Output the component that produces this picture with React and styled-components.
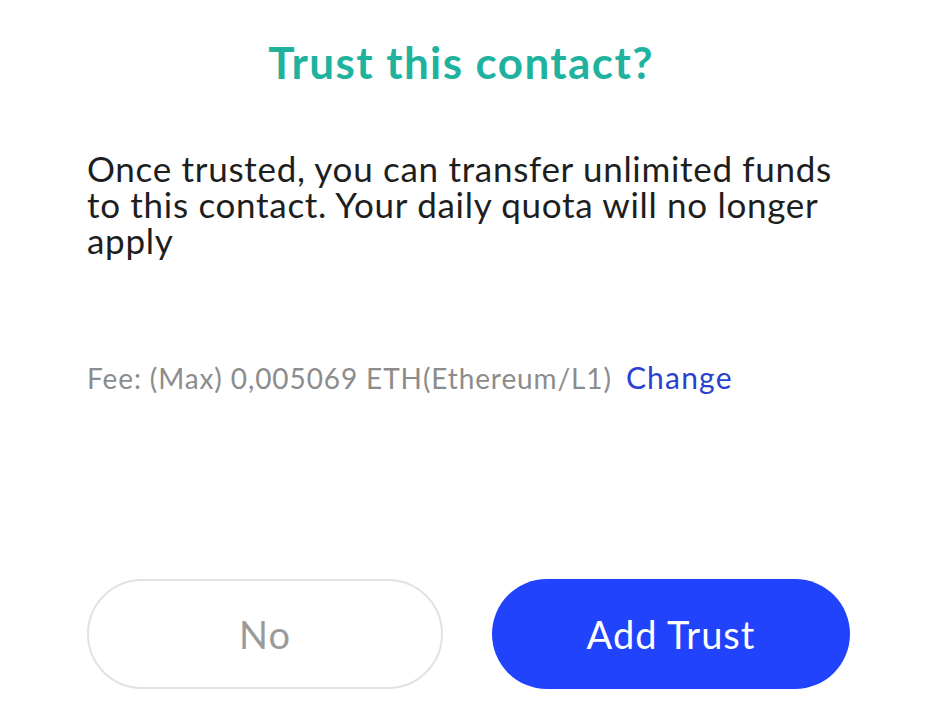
import React from "react";
import styled, { createGlobalStyle } from "styled-components";

const GlobalStyle = createGlobalStyle`
  html, body {
    margin: 0;
    padding: 0;
    background: #fff;
  }
  body {
    font-family: "Lato", "Open Sans", sans-serif;
  }
`;

const TrustDialog = () => {
  return (
    <>
      <GlobalStyle />
      <Sheet>
        <Title>Trust this contact?</Title>
        <Message>
          Once trusted, you can transfer unlimited funds to this contact. Your
          daily quota will no longer apply
        </Message>
        <FeeRow>
          <FeeText>Fee: (Max) 0,005069 ETH(Ethereum/L1)</FeeText>
          <ChangeLink href="#">Change</ChangeLink>
        </FeeRow>
        <Actions>
          <ActionButton type="button">No</ActionButton>
          <ActionButton type="button" primary>
            Add Trust
          </ActionButton>
        </Actions>
      </Sheet>
    </>
  );
};

const Sheet = styled.div`
  box-sizing: border-box;
  width: 941px;
  height: 715px;
  padding: 34px 91px 0 87px;
  display: flex;
  flex-direction: column;
  background: #fff;
  overflow: hidden;
`;

const Title = styled.h1`
  margin: 0;
  text-align: center;
  font: normal normal 700 44px/56px "Lato", sans-serif;
  letter-spacing: 1.4px;
  color: #1fb39f;
  padding-right: 15px;
`;

const Message = styled.p`
  margin: 60px 0 0;
  font: normal normal 400 35px/36px "Lato", sans-serif;
  color: #1e1e1e;
  letter-spacing: 0.7px;
`;

const FeeRow = styled.div`
  margin-top: 101px;
  display: flex;
  align-items: baseline;
  gap: 14px;
  font: normal normal 400 28px/36px "Lato", sans-serif;
  letter-spacing: 0.9px;
`;

const FeeText = styled.span`
  color: #8c8c8c;
`;

const ChangeLink = styled.a`
  color: #2a3fd4;
  text-decoration: none;
  font-size: 30px;
  letter-spacing: 1.2px;
`;

const Actions = styled.div`
  margin-top: 183px;
  display: grid;
  grid-template-columns: 356px 358px;
  justify-content: space-between;
`;

const ActionButton = styled.button`
  box-sizing: border-box;
  height: 110px;
  border-radius: 55px;
  border: ${(p) => (p.primary ? "none" : "2px solid #e2e2e2")};
  background: ${(p) => (p.primary ? "#2043fb" : "#fff")};
  color: ${(p) => (p.primary ? "#fff" : "#9a9a9a")};
  font: normal normal 400 38px/1 "Lato", sans-serif;
  letter-spacing: 1px;
  cursor: pointer;
`;

export default TrustDialog;
